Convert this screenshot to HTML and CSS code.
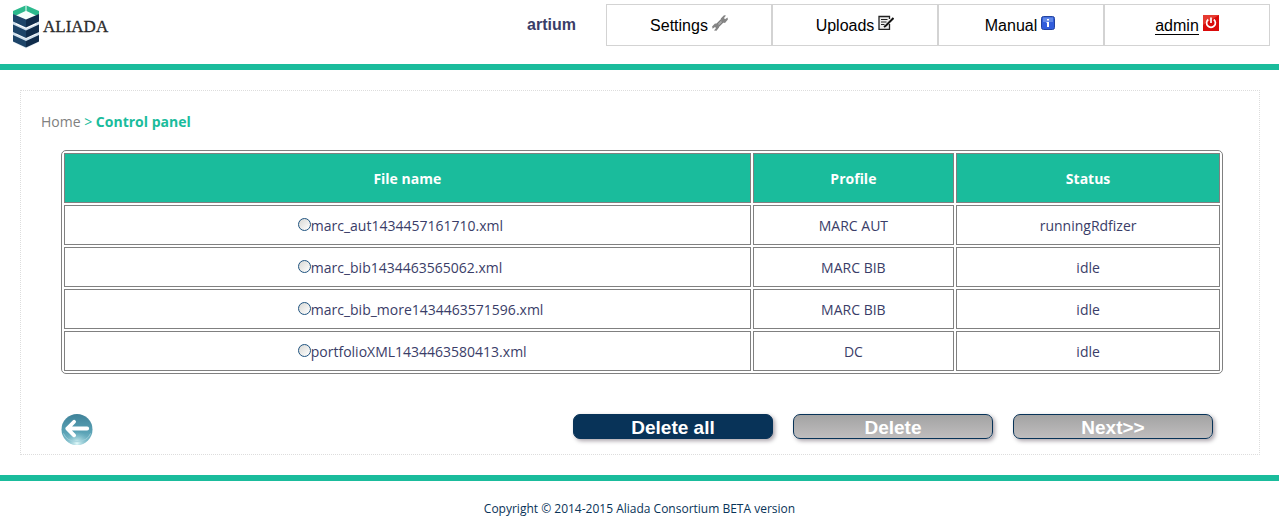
FILE: index.html
```html
<!DOCTYPE html>
<html lang="en">
<head>
<meta charset="utf-8">
<title>ALIADA - Control panel</title>
<link rel="stylesheet" href="styles.css">
</head>
<body>
<header class="header">
  <a class="logo" href="#" aria-label="Aliada home">
    <svg class="logo-mark" viewBox="0 0 28 44" aria-hidden="true">
      <path d="M1 6 14 .5 27 6V37L14 43.500 1 37Z" fill="#e4edf5"/>
      <path d="M1 6 14 .5 27 6V10L14 15 1 10Z" fill="#f4fffb"/>
      <path d="M1 6 13.500 .5V6L4 10.500 1 9.500ZM27 6 14.500 .5V6L24 10.500 27 9.500Z" fill="#2bb98c"/>
      <path d="M1 17 14 21 27 17 27 20 14 27 1 20ZM1 27 14 31 27 27 27 30 14 37 1 30Z" fill="#cfdfec"/>
      <path d="M4 18.500 14 23 24 18.500M4 28.500 14 33 24 28.500" fill="none" stroke="#fff" stroke-width="1.500"/>
      <path d="M1 9 14 14.500V22.500L1 16.500ZM1 19.500 14 25.500V33L1 27ZM1 30 14 36V42.500L1 36.500Z" fill="#1d4468"/>
      <path d="M27 9 14 14.500V22.500L27 16.500ZM27 19.500 14 25.500V33L27 27ZM27 30 14 36V42.500L27 36.500Z" fill="#102c4b"/>
    </svg>
    <span class="logo-name">ALIADA</span>
  </a>
  <strong class="institution">artium</strong>
  <nav class="menu">
    <a class="menu-item" href="#"><span>Settings</span>
      <svg class="icon" viewBox="0 0 16 16" aria-hidden="true"><path d="M4 12 12 4" stroke="#777" stroke-width="4"/><path d="M4 12 12 4" stroke="#aaa" stroke-width="2"/><path d="M9.500 7 8.800 3.500 12 .3 14 .6 12 3 13 4.200 15.500 2.500 15.900 4.500 13 8ZM6.500 9 7 12.500 4.500 15.700 2 15.500 4 13 3 12 .6 13.800.1 11.500 3 8.500Z" fill="#858585"/></svg>
    </a>
    <a class="menu-item" href="#"><span>Uploads</span>
      <svg class="icon" viewBox="0 0 16 16" aria-hidden="true"><path d="M11.500 9V14.300H1V1.500H11.500V4" fill="#eee" stroke="#222" stroke-width="1.300"/><path d="M3 4.500H9.500M3 7H8.500M3 9.500H6.500" stroke="#222"/><path d="M15.500 3 8 10.500 6 12" fill="none" stroke="#111" stroke-width="2"/></svg>
    </a>
    <a class="menu-item" href="#"><span>Manual</span>
      <svg class="icon" viewBox="0 0 16 16" aria-hidden="true"><rect x=".5" y="1.500" width="13" height="13" rx="2" fill="#315ddc" stroke="#23449f"/><path d="M2 2.500H12V7H2Z" fill="#6289e7"/><path d="M6 4H8V5.500H6ZM5.500 7H8V12H6V8H5.500Z" fill="#fff"/></svg>
    </a>
    <a class="menu-item" href="#"><span class="user">admin</span>
      <svg class="icon" viewBox="0 0 16 16" aria-hidden="true"><path d="M0 0H16V16H0Z" fill="#d90b0b"/><path d="M0 0H16L0 10Z" fill="#e63a30"/><path d="M5.200 4.500A4.400 4.400 0 1 0 10.800 4.500M8 2.500V8" fill="none" stroke="#fff" stroke-width="1.700"/></svg>
    </a>
  </nav>
</header>
<main class="panel">
  <nav class="breadcrumb"><a href="#">Home</a> &gt; <strong>Control panel</strong></nav>
  <form class="files-form">
    <table class="files">
      <colgroup><col class="col-file"><col class="col-profile"><col class="col-status"></colgroup>
      <thead><tr><th>File name</th><th>Profile</th><th>Status</th></tr></thead>
      <tbody>
        <tr><td><label class="file"><input type="radio" name="file">marc_aut1434457161710.xml</label></td><td>MARC AUT</td><td>runningRdfizer</td></tr>
        <tr><td><label class="file"><input type="radio" name="file">marc_bib1434463565062.xml</label></td><td>MARC BIB</td><td>idle</td></tr>
        <tr><td><label class="file"><input type="radio" name="file">marc_bib_more1434463571596.xml</label></td><td>MARC BIB</td><td>idle</td></tr>
        <tr><td><label class="file"><input type="radio" name="file">portfolioXML1434463580413.xml</label></td><td>DC</td><td>idle</td></tr>
      </tbody>
    </table>
    <div class="actions">
      <button class="back" type="button" aria-label="Back">
        <svg viewBox="0 0 32 32" aria-hidden="true">
          <defs>
            <linearGradient id="disc" x2="0" y2="1"><stop offset="0" stop-color="#3f8299"/><stop offset=".6" stop-color="#5ba3b6"/><stop offset="1" stop-color="#8cc5d1"/></linearGradient>
            <radialGradient id="glow" cx=".5" cy=".95" r=".4"><stop offset="0" stop-color="#e4fbfb"/><stop offset="1" stop-color="#7fc0cc" stop-opacity="0"/></radialGradient>
          </defs>
          <circle cx="16" cy="16" r="16" fill="url(#disc)"/>
          <circle cx="16" cy="16" r="16" fill="url(#glow)"/>
          <path d="M2 20Q5 28 16 28.500 27 28 30 20" fill="none" stroke="#a5d2dc" stroke-width=".8"/>
          <path d="M13 8 6 15 13 22M6 15H26.500" fill="none" stroke="#fff" stroke-width="4" stroke-linecap="round" stroke-linejoin="round"/>
        </svg>
      </button>
      <div class="buttons">
        <button class="button button-primary" type="button">Delete all</button>
        <button class="button" type="button">Delete</button>
        <button class="button" type="button">Next&gt;&gt;</button>
      </div>
    </div>
  </form>
</main>
<footer class="footer">Copyright © 2014-2015 Aliada Consortium BETA version</footer>
</body>
</html>
```
FILE: styles.css
```css
* { box-sizing: border-box; }
body {
  margin: 0;
  background: #fff;
  color: #3a3d68;
  font: 14px/20px "Open Sans", "Noto Sans", sans-serif;
}
a { color: inherit; text-decoration: none; }
.header {
  display: flex;
  align-items: flex-start;
  min-height: 70px;
  padding: 4px 9px 0 12px;
  border-bottom: 6px solid #1abc9c;
  font-family: "Liberation Sans", Arial, sans-serif;
  font-size: 16px;
}
.logo { display: flex; align-items: center; gap: 3px; margin-right: auto; }
.logo-mark { width: 28px; height: 46px; }
.logo-name { color: #2c2c2c; font: 17px/20px "Liberation Serif", serif; -webkit-text-stroke: 0.3px #2c2c2c; }
.institution { margin-right: 30px; line-height: 42px; }
.menu { display: flex; flex: 0 1 664px; }
.menu-item {
  display: flex;
  flex: 1;
  align-items: center;
  justify-content: center;
  gap: 4px;
  height: 42px;
  border: 1px solid #d3d3d3;
  color: #000;
}
.menu-item span { padding-top: 2px; }
.icon { width: 16px; height: 16px; margin-bottom: 4px; }
.user { border-bottom: 1px solid #000; line-height: 17px; }
.panel { margin: 20px 19px 20px 20px; padding: 21px 36px 9px 20px; border: 1px dotted #ddd; }
.breadcrumb { color: #1abc9c; }
.breadcrumb a { color: #808080; }
.files-form { padding-left: 20px; }
.files {
  width: 100%;
  margin-top: 18px;
  border: 1px solid #808080;
  border-collapse: separate;
  border-spacing: 2px;
  border-radius: 5px;
  table-layout: fixed;
  text-align: center;
}
.col-file { width: 59.6%; }
.col-profile { width: 17.5%; }
.col-status { width: 22.9%; }
.files th, .files td { padding: 2px 0 0; border: 1px solid #808080; }
.files th { height: 50px; background: #1abc9c; color: #fff; }
.files td { height: 40px; }
.files td:first-child { text-align: left; }
.file { display: flex; align-items: center; margin-left: 34%; }
.file input {
  appearance: none;
  width: 13px;
  height: 13px;
  margin: 0 0 4px;
  border: 1px solid #1f5380;
  border-radius: 50%;
  background: linear-gradient(135deg, #d8d8d4, #fff);
}
.actions { display: flex; justify-content: space-between; align-items: flex-start; margin-top: 40px; padding-right: 10px; }
.back { width: 32px; height: 31px; padding: 0; border: 0; background: none; }
.back svg { display: block; width: 32px; height: 31px; }
.buttons { display: flex; gap: 20px; }
.button {
  width: 200px;
  height: 25px;
  padding: 2px 0 0;
  border: 1px solid #083358;
  border-radius: 7px;
  background: linear-gradient(#a3a3a3, #bfbdbe);
  box-shadow: 2px 2px 4px #aaa3aa;
  color: #fff;
  font: bold 19px/21px "Liberation Sans", Arial, sans-serif;
}
.button-primary { background: #083358; }
.footer { padding: 18px 0 1px; border-top: 6px solid #1abc9c; color: #083358; font-size: 12px; text-align: center; }
```
